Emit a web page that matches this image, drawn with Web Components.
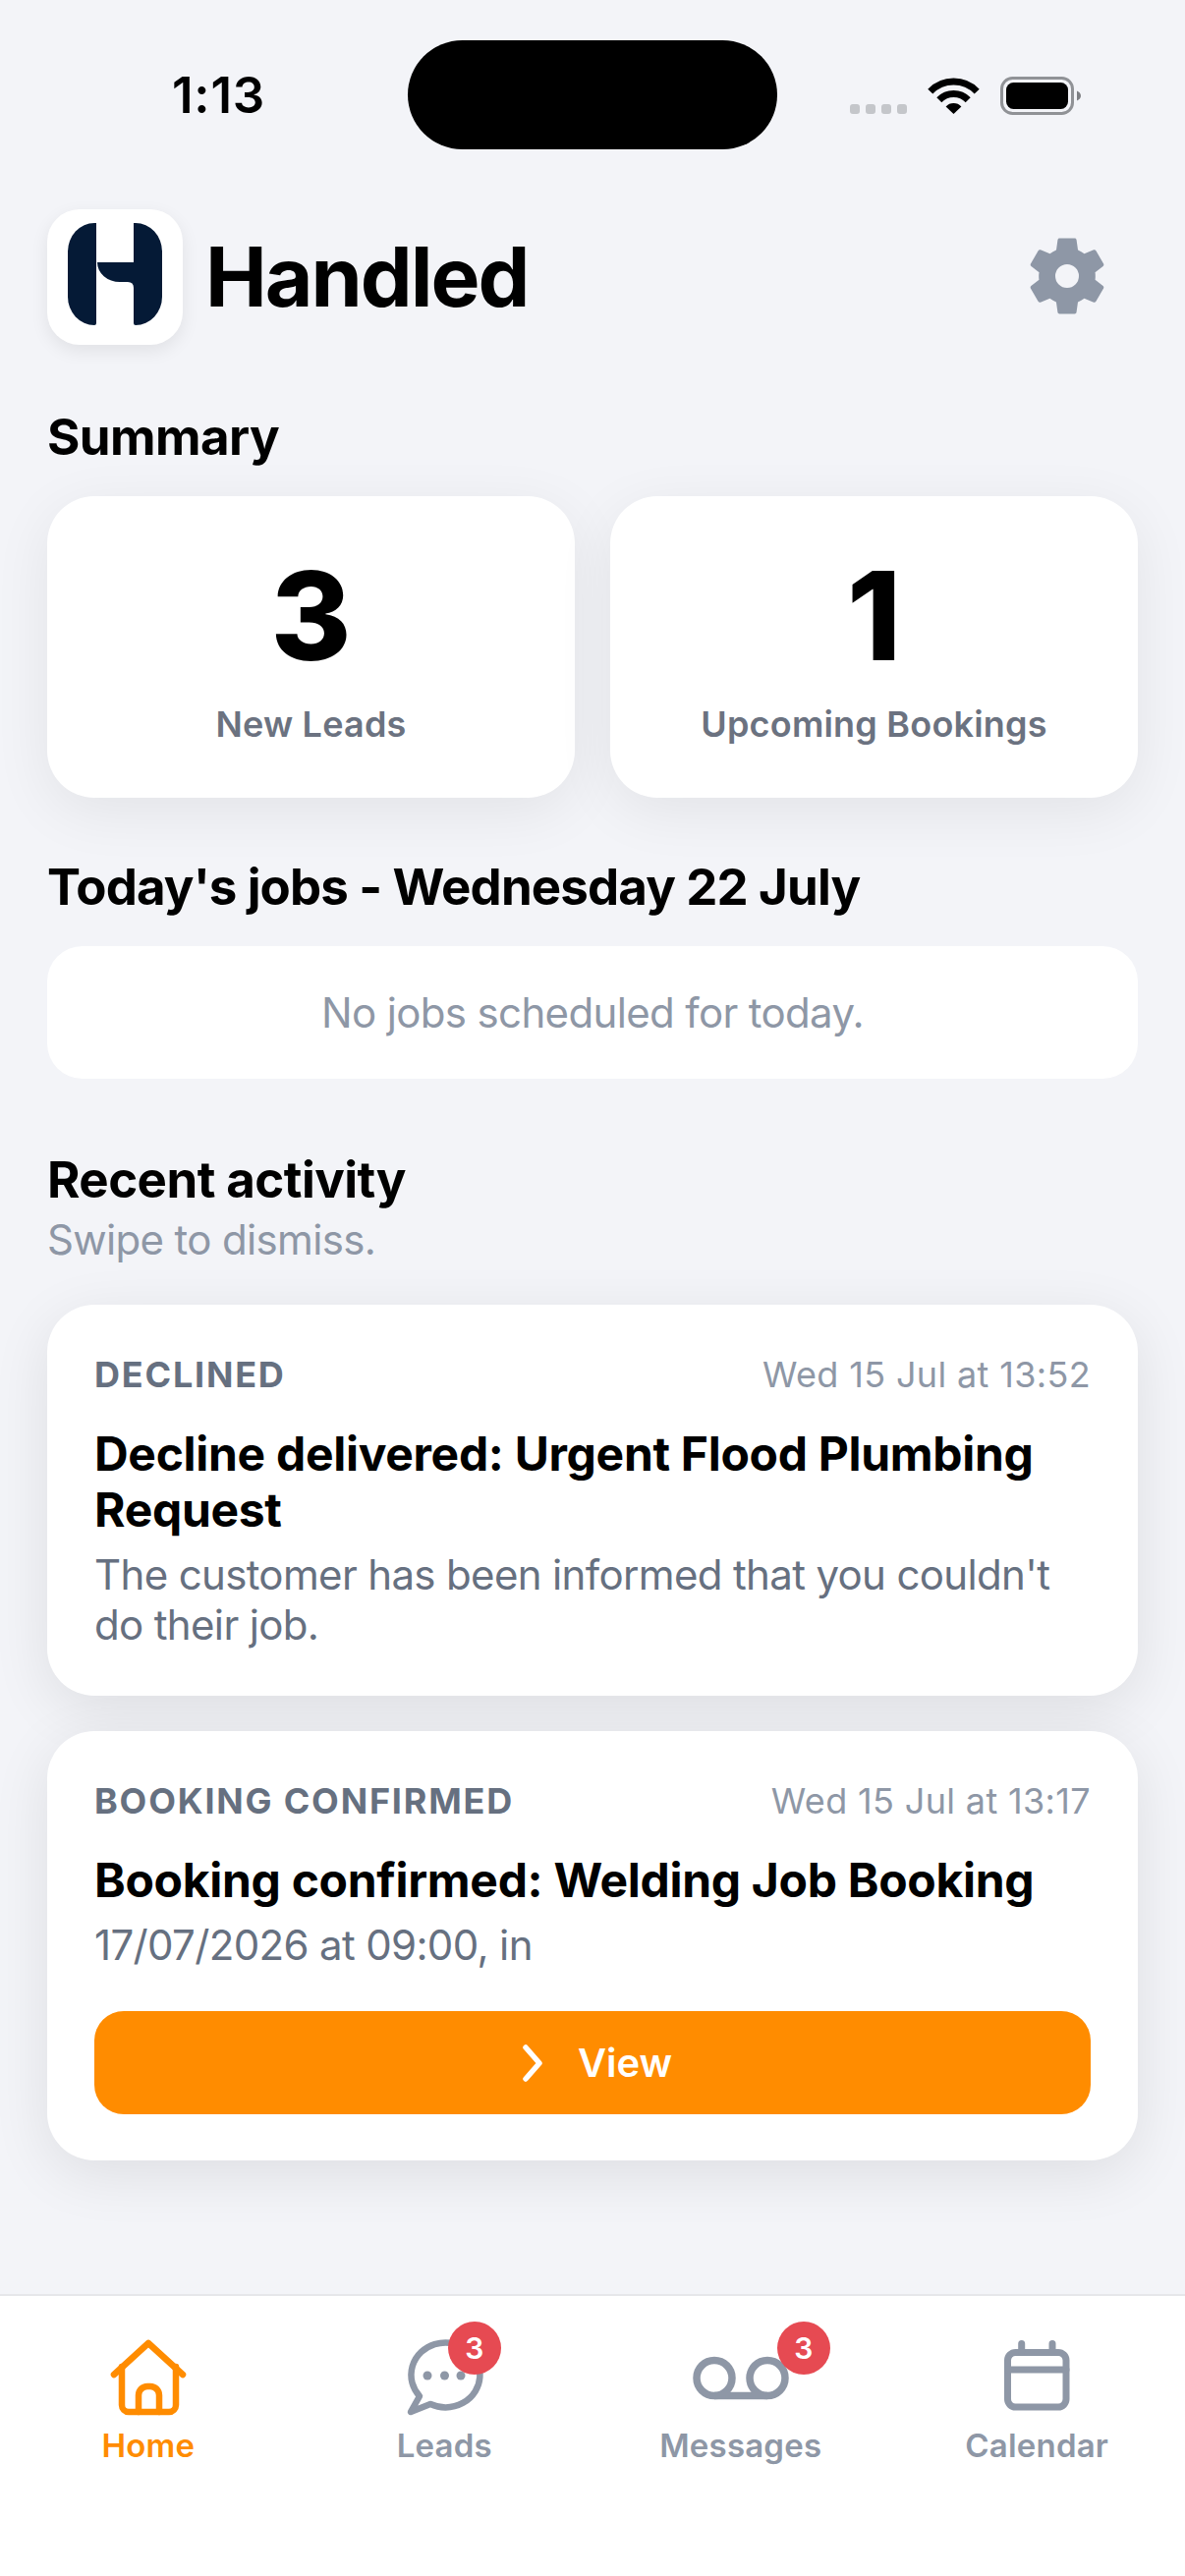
<!DOCTYPE html>
<html lang="en"><head><meta charset="utf-8"><title>Handled</title>
<style>
html,body{margin:0;padding:0;height:100%}
body{width:1206px;height:2622px;overflow:hidden;background:#f3f4f8;font-family:Inter,"Liberation Sans",sans-serif;color:#000}
app-shell{height:2622px}
</style></head><body>
<app-shell>
  <status-bar time="1:13"></status-bar>
  <app-header name="Handled"></app-header>
  <section-title style="margin-top:64px">Summary</section-title>
  <stat-row style="margin-top:30px">
    <stat-card value="3" label="New Leads"></stat-card>
    <stat-card value="1" label="Upcoming Bookings"></stat-card>
  </stat-row>
  <section-title style="margin-top:61px" tight>Today's jobs - Wednesday 22 July</section-title>
  <empty-card style="margin-top:30px">No jobs scheduled for today.</empty-card>
  <section-title style="margin-top:73px">Recent activity</section-title>
  <section-hint>Swipe to dismiss.</section-hint>
  <activity-card style="margin-top:39px" kind="DECLINED" time="Wed 15 Jul at 13:52" title="Decline delivered: Urgent Flood Plumbing Request">The customer has been informed that you couldn't do their job.</activity-card>
  <activity-card style="margin-top:36px" kind="BOOKING CONFIRMED" time="Wed 15 Jul at 13:17" title="Booking confirmed: Welding Job Booking" action="View">17/07/2026 at 09:00, in</activity-card>
  <tab-bar slot="nav">
    <tab-item label="Home" icon="home" active></tab-item>
    <tab-item label="Leads" icon="chat" badge="3" badge-right="-19"></tab-item>
    <tab-item label="Messages" icon="voicemail" badge="3" badge-right="-43"></tab-item>
    <tab-item label="Calendar" icon="calendar"></tab-item>
  </tab-bar>
</app-shell>
<script>
const el=(html)=>{const t=document.createElement('template');t.innerHTML=html;return t.content};
class Base extends HTMLElement{
  render(html){ if(!this.shadowRoot) this.attachShadow({mode:'open'}); this.shadowRoot.innerHTML=''; this.shadowRoot.appendChild(el(html)); }
}
customElements.define('app-shell',class extends Base{connectedCallback(){this.render(`<style>
:host{display:flex;flex-direction:column;width:1206px;height:2622px}
main{flex:1;display:flex;flex-direction:column;min-height:0;padding:0 48px}
</style><main><slot></slot></main><slot name="nav"></slot>`)}});
customElements.define('status-bar',class extends Base{connectedCallback(){this.render(`<style>
:host{display:flex;height:152px;margin:0 -48px;align-items:flex-start;box-sizing:border-box;padding-top:41px;position:relative}
.time{width:415px;height:111px;display:flex;align-items:center;justify-content:center;box-sizing:border-box;padding-left:30px;font:600 51px/1 Inter,"Liberation Sans",sans-serif;letter-spacing:.8px}
.island{width:376px;height:111px;border-radius:56px;background:#000}
.right{height:39px;margin-top:37px;display:flex;align-items:flex-end;margin-left:74px}
.dots{display:flex;gap:6px;margin-right:22px;padding-bottom:1px}
.dots i{width:10px;height:10px;border-radius:3px;background:#c4c6ca}
svg{display:block;overflow:visible}
.bat{margin-left:22px}
</style><div class="time">${this.getAttribute('time')}</div><div class="island"></div>
<div class="right"><div class="dots"><i></i><i></i><i></i><i></i></div>
<svg width="51" height="37" viewBox="0 0 51 37" style="margin-bottom:1px" fill="none" stroke="#000" stroke-width="7"><path d="M1.8 14.1A33 33 0 0 1 49.2 14.1"/><path d="M10.8 22.8A20.5 20.5 0 0 1 40.2 22.8"/><path d="M25.5 37L17.6 29.4A11 11 0 0 1 33.4 29.4Z" fill="#000" stroke="none"/></svg>
<svg class="bat" width="82" height="39" viewBox="0 0 82 39"><rect x="1.5" y="1.5" width="72" height="36" rx="11" fill="none" stroke="#909296" stroke-width="3"/><rect x="6" y="6" width="63" height="27" rx="7.5" fill="#000"/><path d="M78 14.5c2.5 1 4 2.8 4 5s-1.5 4-4 5z" fill="#7d7f83"/></svg></div>`)}});
customElements.define('app-header',class extends Base{connectedCallback(){this.render(`<style>
:host{display:flex;align-items:center;height:138px;margin-top:61px}
.logo{width:138px;height:138px;border-radius:33px;background:#fff;box-shadow:0 6px 18px rgba(0,0,0,.08);flex:none}
svg{display:block}
h1{margin:0 0 0 23px;flex:1;font:700 84px/1 Inter,"Liberation Sans",sans-serif;letter-spacing:-2px}
.gear{margin-right:24px;margin-top:-2px;flex:none}
</style><div class="logo"><svg width="138" height="138" viewBox="48 213 138 138" fill="#051a36"><path d="M98 227V329q0 2-2 2A27 29 0 0 1 69 302V256A27 29 0 0 1 96 227q2 0 2 0z"/><path d="M136 227q0 0 2 0A27 29 0 0 1 165 256V302A27 29 0 0 1 138 331q-2 0-2-2V293q0-6-6-6H122A23 20 0 0 1 99 267H136z"/></svg></div>
<h1>${this.getAttribute('name')}</h1>
<svg class="gear" width="96" height="96" viewBox="0 0 24 24" fill="#8e97a6" fill-rule="evenodd"><path d="M19.14 12.94c.04-.3.06-.61.06-.94 0-.32-.02-.64-.07-.94l2.03-1.58c.18-.14.23-.41.12-.61l-1.92-3.32c-.12-.22-.37-.29-.59-.22l-2.39.96c-.5-.38-1.03-.7-1.62-.94l-.36-2.54c-.04-.24-.24-.41-.48-.41h-3.84c-.24 0-.43.17-.47.41l-.36 2.54c-.59.24-1.13.57-1.62.94l-2.39-.96c-.22-.08-.47 0-.59.22L2.74 8.87c-.12.21-.08.47.12.61l2.03 1.58c-.05.3-.09.63-.09.94s.02.64.07.94l-2.03 1.58c-.18.14-.23.41-.12.61l1.92 3.32c.12.22.37.29.59.22l2.39-.96c.5.38 1.03.7 1.62.94l.36 2.54c.05.24.24.41.48.41h3.84c.24 0 .44-.17.47-.41l.36-2.54c.59-.24 1.13-.56 1.62-.94l2.39.96c.22.08.47 0 .59-.22l1.92-3.32c.12-.22.07-.47-.12-.61l-2.01-1.58zM12 15a3 3 0 1 1 0-6 3 3 0 0 1 0 6z"/></svg>`)}});
customElements.define('section-title',class extends Base{connectedCallback(){const s=this.hasAttribute('tight')?'-.85px':'-.55px';this.render(`<style>
:host{display:block;font:700 51px/60px Inter,"Liberation Sans",sans-serif;letter-spacing:${s};color:#000}
</style><slot></slot>`)}});
customElements.define('section-hint',class extends Base{connectedCallback(){this.render(`<style>
:host{display:block;font:400 42px/54px Inter,"Liberation Sans",sans-serif;letter-spacing:-.65px;color:#8e97a6;margin-top:4px}
</style><slot></slot>`)}});
customElements.define('stat-row',class extends Base{connectedCallback(){this.render(`<style>
:host{display:flex;gap:36px}
</style><slot></slot>`)}});
customElements.define('stat-card',class extends Base{connectedCallback(){this.render(`<style>
:host{flex:1;display:flex;flex-direction:column;align-items:center;height:307px;box-sizing:border-box;padding-top:60px;background:#fff;border-radius:48px;box-shadow:0 14px 60px rgba(0,0,0,.07)}
.v{font:800 125px/124px Inter,"Liberation Sans",sans-serif;color:#000}
.l{margin-top:26px;font:600 36px/44px Inter,"Liberation Sans",sans-serif;color:#6b7280;letter-spacing:.2px}
</style><div class="v">${this.getAttribute('value')}</div><div class="l">${this.getAttribute('label')}</div>`)}});
customElements.define('empty-card',class extends Base{connectedCallback(){this.render(`<style>
:host{display:flex;align-items:center;justify-content:center;height:135px;background:#fff;border-radius:36px;font:400 42px/1 Inter,"Liberation Sans",sans-serif;letter-spacing:-.65px;color:#8e97a6}
</style><slot></slot>`)}});
customElements.define('activity-card',class extends Base{connectedCallback(){const a=this.getAttribute('action');this.render(`<style>
:host{display:block;box-sizing:border-box;background:#fff;border-radius:48px;padding:49px 48px 47px;box-shadow:0 14px 60px rgba(0,0,0,.09)}
.top{display:flex;justify-content:space-between;align-items:center;height:44px}
.k{font:700 36px/44px Inter,"Liberation Sans",sans-serif;letter-spacing:1.8px;color:#667080}
.t{font:400 36px/44px Inter,"Liberation Sans",sans-serif;letter-spacing:.35px;color:#8e97a6}
.h{margin-top:30px;font:700 48px/57px Inter,"Liberation Sans",sans-serif;letter-spacing:-.3px;color:#000}
.b{margin-top:12px;font:400 42px/51px Inter,"Liberation Sans",sans-serif;letter-spacing:-.65px;color:#667080}
button{all:unset;box-sizing:border-box;display:flex;align-items:center;justify-content:center;gap:34px;width:100%;height:105px;margin-top:42px;padding-left:8px;border-radius:30px;background:#ff8c00;color:#fff;font:600 40px/1 Inter,"Liberation Sans",sans-serif}
</style><div class="top"><span class="k">${this.getAttribute('kind')}</span><span class="t">${this.getAttribute('time')}</span></div>
<div class="h">${this.getAttribute('title')}</div><div class="b"><slot></slot></div>
${a?`<button><svg width="24" height="38" viewBox="0 0 24 38" fill="none" stroke="#fff" stroke-width="5.5" stroke-linecap="round" stroke-linejoin="round"><path d="M5 3L19 19L5 35"/></svg><span>${a}</span></button>`:''}`)}});
customElements.define('tab-bar',class extends Base{connectedCallback(){this.render(`<style>
:host{display:grid;grid-template-columns:repeat(4,1fr);height:287px;box-sizing:border-box;background:#fff;border-top:2px solid #e6e7ea;padding-top:45px;flex:none;position:relative}
</style><slot></slot>`)}});
const ICONS={
home:`<svg width="76" height="76" viewBox="0 0 76 76" fill="none" stroke="currentColor" stroke-width="6.5" stroke-linecap="round" stroke-linejoin="round"><path d="M3 35L38 3L73 35"/><path d="M11 27V66a7 7 0 0 0 7 7H59a7 7 0 0 0 7-7V27"/><path d="M28 73V56a9 9 0 0 1 9-9h3a9 9 0 0 1 9 9V73"/></svg>`,
chat:`<svg width="77" height="76" viewBox="0 0 77 76" fill="none" stroke="currentColor" stroke-width="6.5" stroke-linecap="round" stroke-linejoin="round"><path d="M13 57A35 33 0 1 1 24 65L4 73Z"/><g fill="currentColor" stroke="none"><circle cx="21" cy="36" r="4.5"/><circle cx="38.5" cy="36" r="4.5"/><circle cx="55" cy="36" r="4.5"/></g></svg>`,
voicemail:`<svg width="96" height="76" viewBox="0 0 96 76" fill="none" stroke="currentColor" stroke-width="7.5"><g transform="translate(0 17)"><circle cx="21" cy="21.5" r="18"/><circle cx="75" cy="21.5" r="18"/><path d="M21 39.5H75"/></g></svg>`,
calendar:`<svg width="67" height="76" viewBox="0 0 67 76" fill="none" stroke="currentColor" stroke-width="7" stroke-linecap="round"><rect x="3.5" y="12.5" width="59.5" height="55.5" rx="8"/><path d="M3.5 30H63M17.7 3.5V12M49 3.5V12"/></svg>`};
customElements.define('tab-item',class extends Base{connectedCallback(){const b=this.getAttribute('badge');const r=this.getAttribute('badge-right')||0;this.render(`<style>
:host{display:flex;flex-direction:column;align-items:center;color:${this.hasAttribute('active')?'#ff8c00':'#8e97a6'}}
.i{position:relative;display:block;height:76px}
svg{display:block;overflow:visible}
.badge{position:absolute;top:-19px;right:${r}px;width:54px;height:54px;border-radius:50%;background:#e64a52;color:#fff;font:600 30px/54px Inter,"Liberation Sans",sans-serif;text-align:center}
.l{margin-top:11px;font:600 33px/40px Inter,"Liberation Sans",sans-serif;letter-spacing:.2px}
</style><div class="i">${ICONS[this.getAttribute('icon')]}${b?`<span class="badge">${b}</span>`:''}</div><div class="l">${this.getAttribute('label')}</div>`)}});
</script>
</body></html>
